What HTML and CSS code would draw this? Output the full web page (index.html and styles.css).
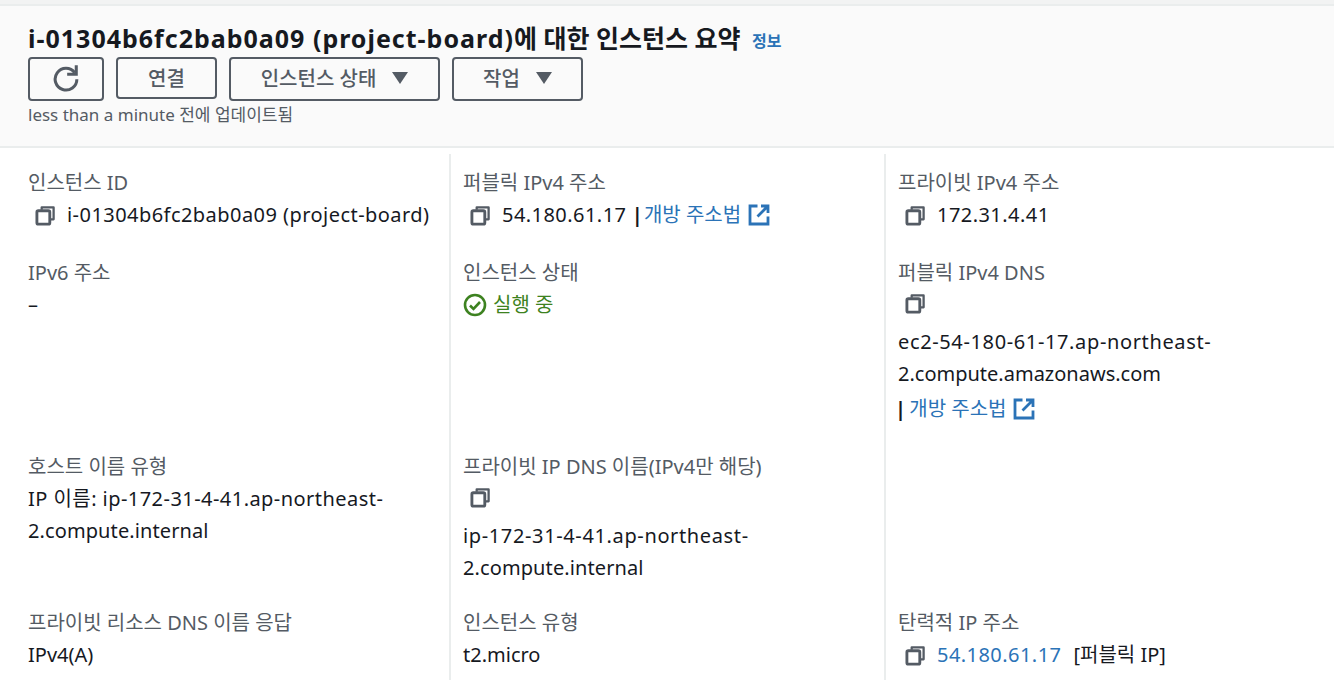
FILE: index.html
```html
<!DOCTYPE html>
<html lang="ko">
<head>
    <meta charset="UTF-8">
    <title>인스턴스 요약</title>
    <link rel="stylesheet" href="styles.css">
</head>
<body>
    <svg class="defs" width="0" height="0">
        <symbol id="copy" viewBox="0 0 22 22">
            <path d="M7 5V2.5h12.5V15H16" fill="none" stroke="currentColor" stroke-width="2.4" stroke-linejoin="round"/>
            <rect x="2" y="6" width="13.5" height="14" rx="1.5" fill="none" stroke="currentColor" stroke-width="3"/>
        </symbol>
        <symbol id="external" viewBox="0 0 22 22">
            <path d="M9.5 2H2v18h18v-7.5" fill="none" stroke="currentColor" stroke-width="2.8"/>
            <path d="M13 2h7v7M20 2L9.5 12.5" fill="none" stroke="currentColor" stroke-width="2.8"/>
        </symbol>
    </svg>

    <div class="top-strip"></div>

    <header class="summary-header">
        <h1><span class="wide-title">i-01304b6fc2bab0a09 (project-board)</span>에 대한 인스턴스 요약 <a class="info-link" href="#">정보</a></h1>
        <div class="actions">
            <button class="btn btn-icon">
                <svg width="28" height="28" viewBox="0 0 24 24"><path d="M19.5 7.5A9.3 9.3 0 1 0 21.3 13" fill="none" stroke="currentColor" stroke-width="2.6"/><path d="M20.8 1v7.8H13" fill="none" stroke="currentColor" stroke-width="2.6"/></svg>
            </button>
            <button class="btn btn-connect">연결</button>
            <button class="btn btn-state">인스턴스 상태 <span class="caret"></span></button>
            <button class="btn btn-action">작업 <span class="caret"></span></button>
        </div>
        <p class="updated">less than a minute 전에 업데이트됨</p>
    </header>

    <section class="details">
        <div class="cell row-1">
            <div class="label">인스턴스 ID</div>
            <div class="value indent"><svg class="icon-copy"><use href="#copy"/></svg><span class="wide">i-01304b6fc2bab0a09 (project-board)</span></div>
        </div>
        <div class="cell row-1">
            <div class="label">퍼블릭 IPv4 주소</div>
            <div class="value indent"><svg class="icon-copy"><use href="#copy"/></svg><span><span class="wide">54.180.61.17</span> <b class="pipe">|</b> <a href="#">개방 주소법<svg class="icon-ext"><use href="#external"/></svg></a></span></div>
        </div>
        <div class="cell row-1">
            <div class="label">프라이빗 IPv4 주소</div>
            <div class="value indent"><svg class="icon-copy"><use href="#copy"/></svg><span class="wide">172.31.4.41</span></div>
        </div>

        <div class="cell row-2">
            <div class="label">IPv6 주소</div>
            <div class="value">–</div>
        </div>
        <div class="cell row-2">
            <div class="label">인스턴스 상태</div>
            <div class="value running">
                <svg width="24" height="24" viewBox="0 0 24 24"><circle cx="12" cy="12" r="10" fill="none" stroke="currentColor" stroke-width="2.6"/><path d="M7 12.5l3.5 3.5L17 9" fill="none" stroke="currentColor" stroke-width="2.6"/></svg>
                실행 중
            </div>
        </div>
        <div class="cell row-2">
            <div class="label">퍼블릭 IPv4 DNS</div>
            <div class="value indent copy-only"><svg class="icon-copy"><use href="#copy"/></svg></div>
            <div class="value"><span class="wider">ec2-54-180-61-17.ap-northeast-</span><br>2.compute.amazonaws.com</div>
            <div class="value link-line"><b class="pipe-start">|</b> <a href="#">개방 주소법<svg class="icon-ext"><use href="#external"/></svg></a></div>
        </div>

        <div class="cell row-3">
            <div class="label">호스트 이름 유형</div>
            <div class="value"><span class="wide">IP 이름: ip-172-31-4-41.ap-northeast-</span><br><span class="slight">2.compute.internal</span></div>
        </div>
        <div class="cell row-3">
            <div class="label">프라이빗 IP DNS 이름(IPv4만 해당)</div>
            <div class="value indent copy-only"><svg class="icon-copy"><use href="#copy"/></svg></div>
            <div class="value"><span class="wider">ip-172-31-4-41.ap-northeast-</span><br><span class="slight">2.compute.internal</span></div>
        </div>
        <div class="cell row-3"></div>

        <div class="cell">
            <div class="label">프라이빗 리소스 DNS 이름 응답</div>
            <div class="value">IPv4(A)</div>
        </div>
        <div class="cell">
            <div class="label">인스턴스 유형</div>
            <div class="value">t2.micro</div>
        </div>
        <div class="cell">
            <div class="label">탄력적 IP 주소</div>
            <div class="value indent"><svg class="icon-copy"><use href="#copy"/></svg><a class="wide" href="#">54.180.61.17</a><span class="tag">[퍼블릭 IP]</span></div>
        </div>
    </section>
</body>
</html>
```

FILE: styles.css
```css
body {
    margin: 0;
    height: 680px;
    overflow: hidden;
    background-color: #fff;
    color: #16191f;
    font-family: "Noto Sans", "Noto Sans CJK KR", sans-serif;
    font-size: 20px;
}
a {
    color: #2b73b7;
    text-decoration: none;
}
.defs {
    position: absolute;
}
.top-strip {
    height: 4px;
    background-color: #f2f3f3;
    border-bottom: 2px solid #eaeded;
}
.summary-header {
    height: 140px;
    padding: 0 28px;
    background-color: #fafafa;
    border-bottom: 2px solid #eaeded;
}
h1 {
    margin: 0;
    padding-top: 15px;
    height: 36px;
    line-height: 35px;
    font-size: 25px;
    font-weight: 700;
    white-space: nowrap;
}
.wide-title {
    letter-spacing: 1px;
}
.info-link {
    margin-left: 5px;
    font-size: 16px;
    font-weight: 700;
    vertical-align: 1px;
}
.actions {
    display: flex;
    align-items: flex-start;
    gap: 12px;
}
.btn {
    display: flex;
    align-items: center;
    justify-content: center;
    gap: 16px;
    height: 44px;
    padding: 0 0 3px;
    background: transparent;
    border: 2px solid #545b64;
    border-radius: 4px;
    color: #545b64;
    font-family: inherit;
    font-size: 20px;
    font-weight: 500;
}
.btn-icon {
    width: 76px;
}
.btn-connect {
    width: 101px;
    height: 42px;
    padding-bottom: 1px;
}
.btn-state {
    width: 211px;
}
.btn-action {
    width: 131px;
}
.caret {
    width: 0;
    height: 0;
    border-left: 8px solid transparent;
    border-right: 8px solid transparent;
    border-top: 12px solid #545b64;
}
.updated {
    margin: 3px 0 0;
    color: #545b64;
    font-size: 17px;
    line-height: 22px;
}
.details {
    display: grid;
    grid-template-columns: 449px 435px 450px;
    grid-template-rows: 90px 194px 156px 1fr;
    height: 532px;
    padding-top: 6px;
    box-sizing: border-box;
}
.cell {
    padding: 13px 12px 0 12px;
    border-left: 2px solid #eaeded;
}
.cell:nth-child(3n+1) {
    padding-left: 28px;
    border-left: 0;
}
.label {
    color: #545b64;
    line-height: 32px;
}
.value {
    line-height: 32px;
    min-height: 32px;
}
.wide {
    letter-spacing: 0.45px;
}
.wider {
    letter-spacing: 0.63px;
}
.slight {
    letter-spacing: 0.1px;
}
.pipe {
    margin-right: -4px;
}
.pipe-start {
    margin-left: -3px;
    margin-right: -2px;
}
.indent {
    display: flex;
    align-items: center;
    padding-left: 7px;
    white-space: pre;
}
.copy-only {
    margin-top: -2px;
    margin-bottom: 7px;
}
.link-line {
    margin-top: 3px;
}
.icon-copy {
    flex: none;
    width: 21px;
    height: 21px;
    margin-right: 11px;
    color: #545b64;
}
.icon-ext {
    width: 22px;
    height: 22px;
    margin-left: 7px;
    vertical-align: -4px;
    color: #2b73b7;
}
.running {
    display: flex;
    align-items: center;
    gap: 6px;
    color: #3d8220;
}
.tag {
    margin-left: 12px;
}
```
